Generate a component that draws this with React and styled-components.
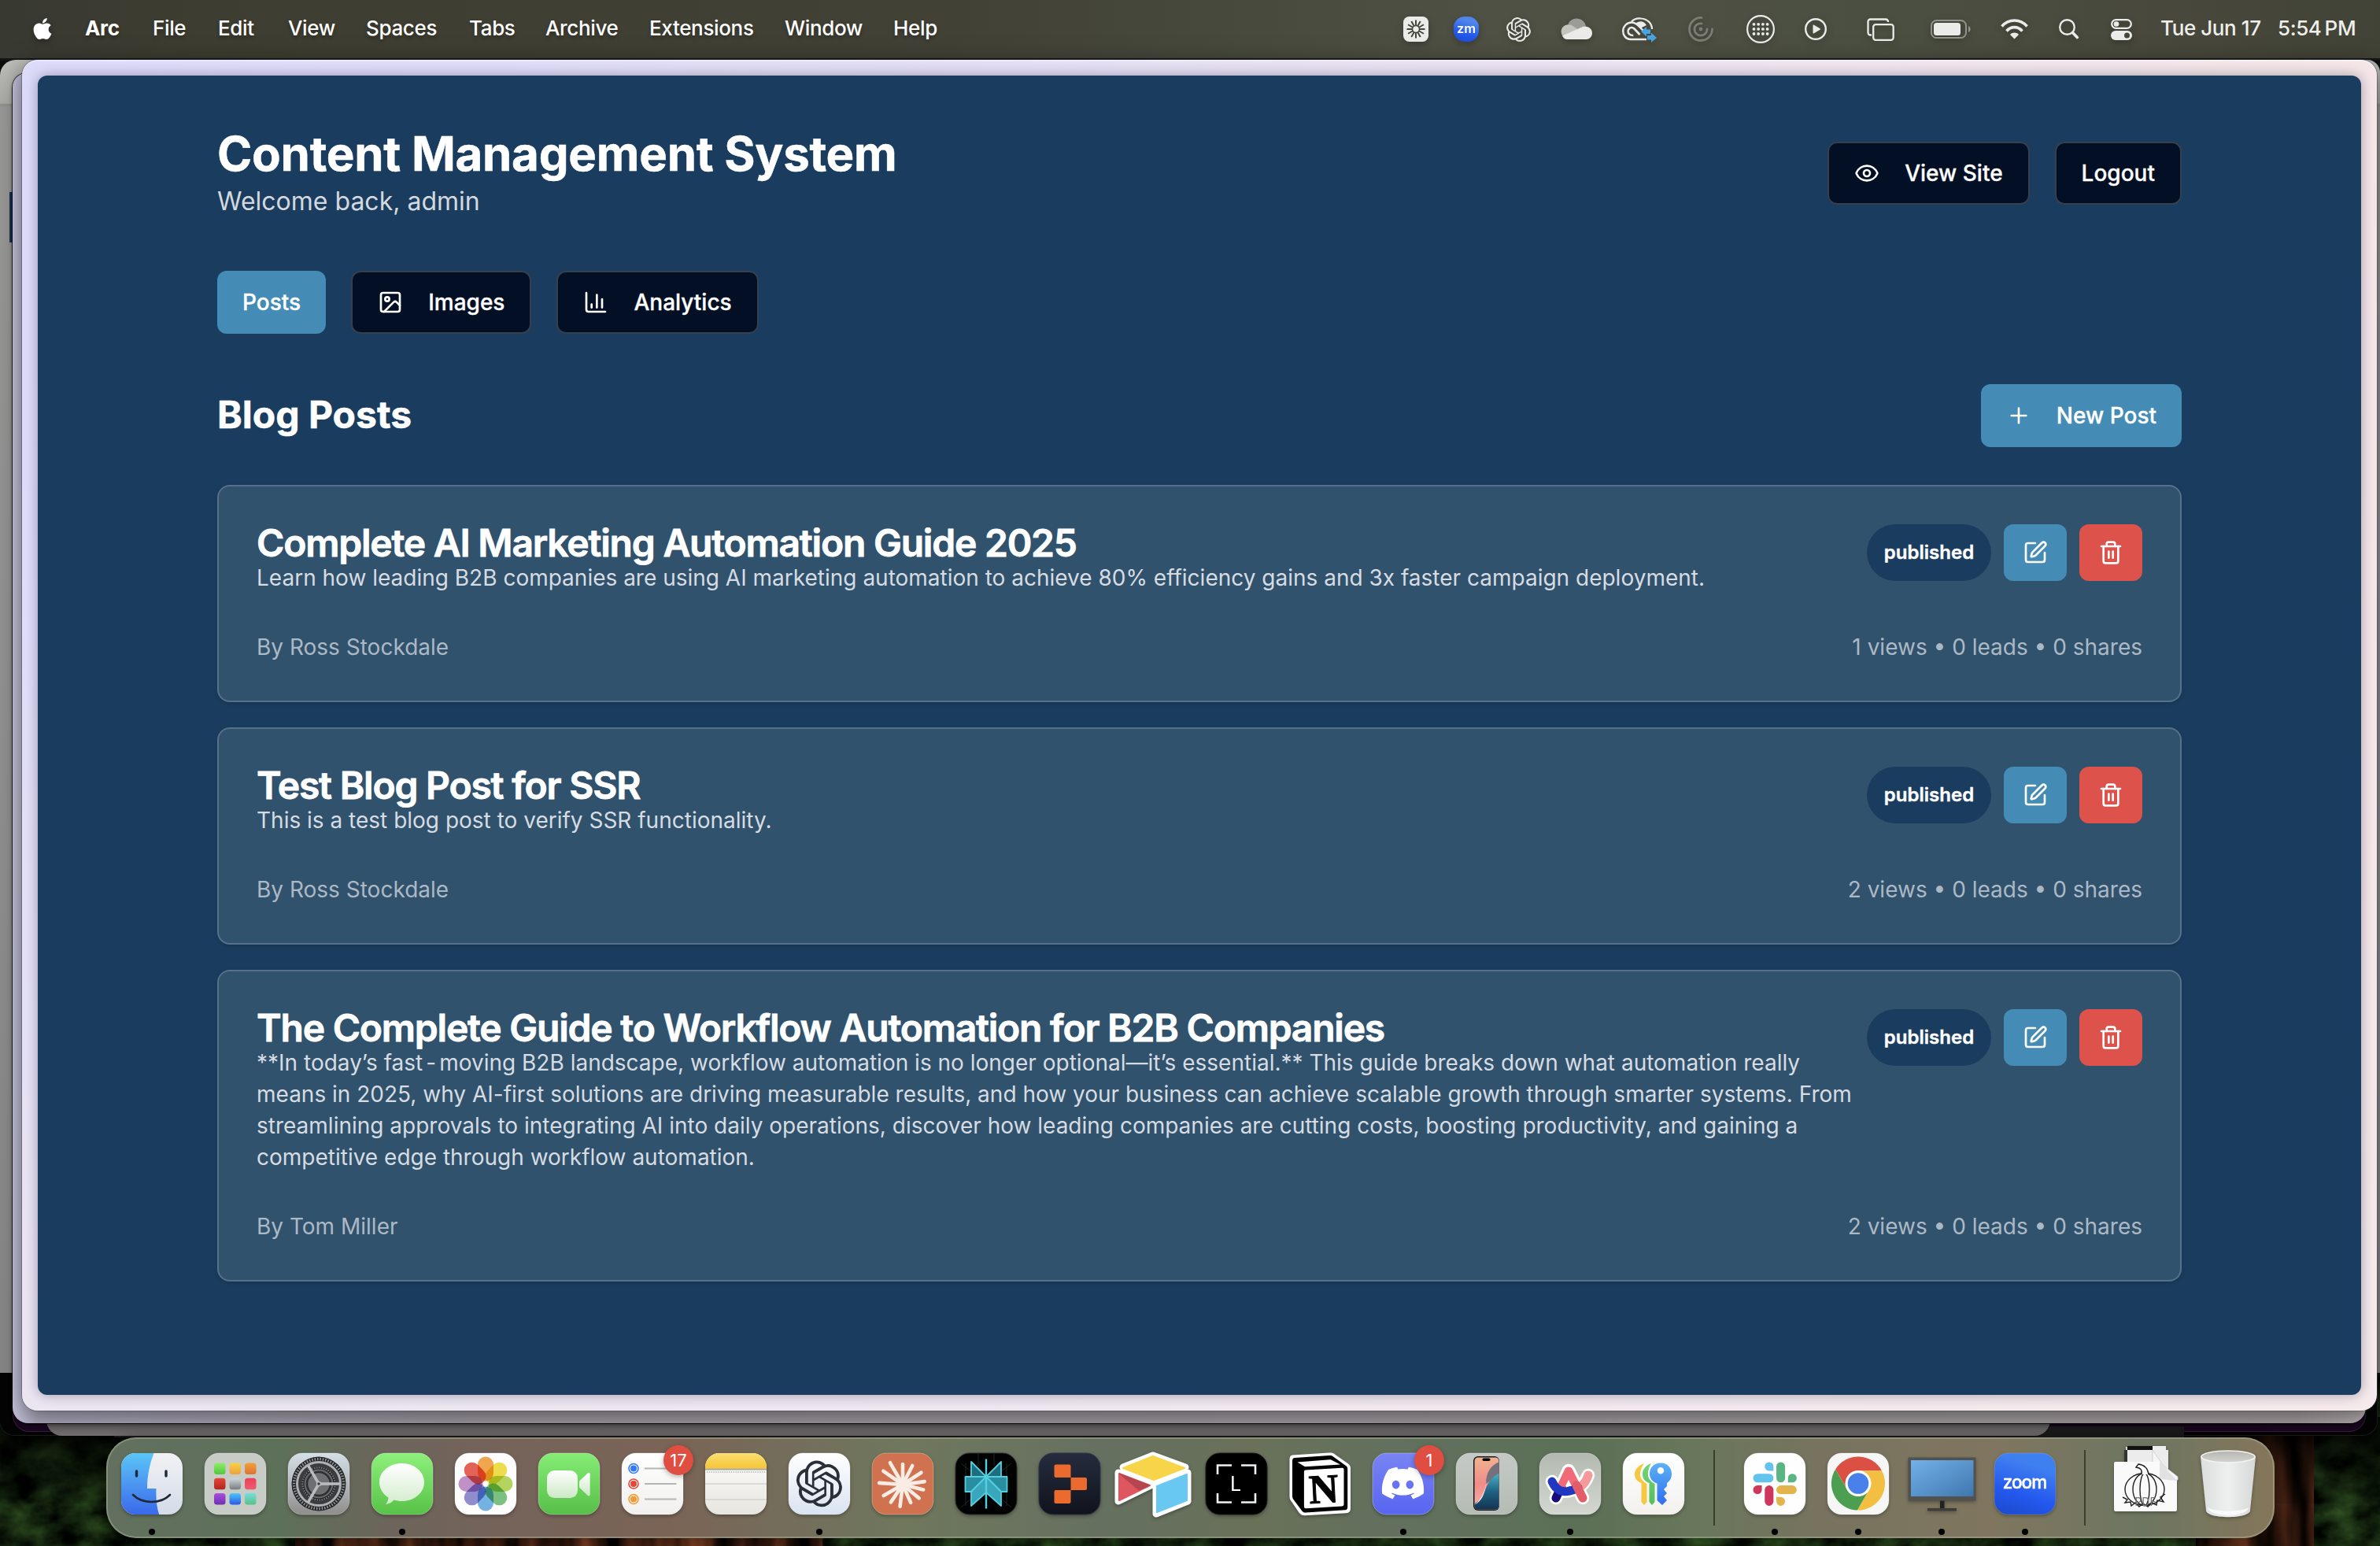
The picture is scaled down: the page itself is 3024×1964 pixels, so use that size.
import React from "react";
import styled, { createGlobalStyle, css } from "styled-components";
import { Eye, Image as ImageIcon, ChartColumn, Plus, SquarePen, Trash2 } from "lucide-react";
import { FaApple, FaDiscord } from "react-icons/fa";

const Global = createGlobalStyle`
  * { box-sizing: border-box; }
  html, body { margin: 0; padding: 0; background: #07090a; }
  body { width: 3024px; height: 1964px; overflow: hidden; font-family: Inter, "Liberation Sans", sans-serif; }
  h1, h2, h3, p { margin: 0; }
  button { font-family: inherit; margin: 0; }
`;

/* ---------- desktop ---------- */

const Screen = styled.div`
  position: relative;
  width: 3024px;
  height: 1964px;
  display: flex;
  flex-direction: column;
  overflow: hidden;
  background: #07090a;
`;

const Wallpaper = styled.svg`
  position: absolute;
  inset: 0;
  width: 3024px;
  height: 1964px;
`;

const MenuBar = styled.header`
  position: relative;
  height: 74px;
  flex: none;
  display: flex;
  align-items: center;
  padding: 0 32px 0 39px;
  color: #fff;
  font-size: 26px;
  line-height: 74px;
  background: linear-gradient(90deg, #383931 0, #3e3d31 260px, #414136 1200px, #4f5144 1900px, #4b4f41 2400px, #48493c 2750px, #414336 100%);
`;

const AppleLogo = styled(FaApple)`
  width: 30px;
  height: 33px;
  margin-right: 39px;
  padding-bottom: 2px;
  filter: drop-shadow(0 3px 4px rgba(0, 0, 0, 0.3));
`;

const MenuItem = styled.span`
  width: ${(p) => p.$width}px;
  flex: none;
  white-space: nowrap;
  padding-bottom: 2px;
  font-weight: ${(p) => (p.$bold ? 700 : 500)};
  letter-spacing: -0.35px;
  text-shadow: 0 3px 5px rgba(0, 0, 0, 0.3);
`;

const StatusArea = styled.div`
  margin-left: auto;
  display: flex;
  align-items: center;
`;

const StatusIcon = styled.svg`
  display: block;
  flex: none;
  overflow: visible;
  margin-left: ${(p) => p.$gap}px;
  filter: drop-shadow(0 3px 4px rgba(0, 0, 0, 0.25));
`;

const Clock = styled.span`
  width: ${(p) => p.$width}px;
  margin-left: ${(p) => p.$gap}px;
  flex: none;
  white-space: nowrap;
  padding-bottom: 2px;
  font-size: 26px;
  font-weight: 500;
  letter-spacing: ${(p) => p.$track};
  color: #efefec;
`;

const Desktop = styled.main`
  position: relative;
  flex: 1;
  display: flex;
  flex-direction: column;
`;

const BackWindow = styled.div`
  position: absolute;
  left: ${(p) => p.$x}px;
  top: ${(p) => p.$y - 74}px;
  width: ${(p) => p.$w}px;
  height: ${(p) => p.$h}px;
  border-radius: ${(p) => p.$r};
  background: ${(p) => p.$bg};
  box-shadow: ${(p) => p.$shadow || "none"};
`;

const BrowserWindow = styled.div`
  position: relative;
  margin: 2px 4px 0 28px;
  height: 1716px;
  flex: none;
  padding: 20px;
  border-radius: 20px;
  background: linear-gradient(180deg, rgba(245, 236, 238, 0) 30%, rgba(245, 236, 238, 0.6) 100%),
    linear-gradient(97deg, #dddbfa 0%, #e4dff4 40%, #efe4ef 72%, #f3e5e7 88%, #f6e7e8 100%);
  box-shadow: 0 0 0 1px rgba(70, 70, 80, 0.45), 0 6px 30px rgba(0, 0, 0, 0.5), inset 0 2px 0 rgba(255, 255, 255, 0.35);
`;

/* ---------- web page ---------- */

const Page = styled.div`
  height: 1676px;
  border-radius: 12px;
  background: #1a3c5e;
  box-shadow: 0 0 16px rgba(40, 40, 70, 0.4);
  padding: 64px 228px 0;
  color: #fff;
`;

const PageHeader = styled.div`
  display: flex;
  align-items: center;
  justify-content: space-between;
  height: 120px;
`;

const PageTitle = styled.h1`
  font-size: 60px;
  line-height: 70px;
  padding-bottom: 2px;
  font-weight: 700;
  letter-spacing: -0.29px;
  white-space: nowrap;
  -webkit-text-stroke: 0.5px currentColor;
`;

const Welcome = styled.p`
  font-size: 32px;
  line-height: 48px;
  color: #d3d9df;
`;

const ButtonRow = styled.div`
  display: flex;
  gap: 32px;
  margin-top: ${(p) => p.$top || 0}px;
`;

const Button = styled.button`
  height: 80px;
  display: inline-flex;
  align-items: center;
  gap: 32px;
  padding: 0 32px;
  border-radius: 12px;
  font-size: 28px;
  font-weight: 500;
  line-height: 40px;
  color: #fff;
  white-space: nowrap;
  -webkit-text-stroke: 0.3px currentColor;
  ${(p) =>
    p.$primary
      ? css`
          border: 0;
          background: #448cb5;
        `
      : css`
          border: 2px solid #363f4e;
          background: #020f24;
        `}
  svg { width: 32px; height: 32px; flex: none; }
`;

const SectionHeader = styled.div`
  margin: 64px 0 48px;
  height: 80px;
  display: flex;
  align-items: center;
  justify-content: space-between;
`;

const SectionTitle = styled.h2`
  font-size: 48px;
  line-height: 64px;
  font-weight: 700;
  padding-bottom: 2px;
  -webkit-text-stroke: 0.5px currentColor;
`;

const PostList = styled.div`
  display: flex;
  flex-direction: column;
  gap: 32px;
`;

const Card = styled.article`
  border: 2px solid #57718a;
  border-radius: 16px;
  background: #30526d;
  padding: 48px;
  display: flex;
  flex-direction: column;
  gap: 48px;
  box-shadow: 0 2px 4px rgba(0, 0, 0, 0.12);
`;

const CardTop = styled.div`
  display: flex;
  justify-content: space-between;
  align-items: flex-start;
`;

const PostTitle = styled.h3`
  font-size: 48px;
  line-height: 48px;
  font-weight: 600;
  letter-spacing: -1.22px;
  white-space: nowrap;
  -webkit-text-stroke: 0.8px currentColor;
`;

const Excerpt = styled.p`
  font-size: 28px;
  line-height: 40px;
  color: #d6dce2;
  white-space: pre;
`;

const WideHyphen = styled.span`
  padding: 0 4px;
`;

const Actions = styled.div`
  display: flex;
  gap: 16px;
`;

const Badge = styled.span`
  width: 158px;
  height: 72px;
  border-radius: 36px;
  display: grid;
  place-items: center;
  padding-bottom: 2px;
  background: #1a3c5e;
  font-size: 24px;
  font-weight: 600;
  -webkit-text-stroke: 0.4px currentColor;
`;

const IconButton = styled.button`
  width: 80px;
  height: 72px;
  border: 0;
  padding: 0;
  border-radius: 12px;
  display: grid;
  place-items: center;
  color: #fff;
  background: ${(p) => (p.$danger ? "#de524c" : "#448cb5")};
`;

const CardMeta = styled.div`
  display: flex;
  justify-content: space-between;
  font-size: 28px;
  line-height: 40px;
  color: #acb9c5;
`;

/* ---------- dock ---------- */

const DockBar = styled.nav`
  position: relative;
  margin: 34px 0 0 135px;
  width: 2755px;
  height: 128px;
  flex: none;
  display: flex;
  align-items: stretch;
  padding: 0 5px;
  border-radius: 38px;
  background: linear-gradient(90deg, #63705f 0, #5d7059 8%, #6c655b 13%, #75635a 18%, #7a6456 26%, #72705c 33%, #6f785d 37%, #667060 46%, #697159 53%, #62705e 60%, #5b7056 68%, #6b775c 74%, #77735f 79%, #80765f 87%, #6d7661 94%, #85765a 100%);
  box-shadow: inset 0 0 0 2px rgba(190, 195, 170, 0.38), 0 0 18px rgba(0, 0, 0, 0.35);
`;

const DockItem = styled.div`
  position: relative;
  width: 106px;
  display: flex;
  flex-direction: column;
  align-items: center;
  padding-top: 19px;
`;

const DockArt = styled.svg`
  width: 80px;
  height: 80px;
  overflow: visible;
  display: block;
  filter: drop-shadow(0 2px 2px rgba(0, 0, 0, 0.3));
`;

const RunningDot = styled.i`
  width: 8px;
  height: 8px;
  margin-top: 17px;
  border-radius: 50%;
  background: #000;
`;

const CountBadge = styled.span`
  position: absolute;
  top: 10px;
  left: 67px;
  width: 38px;
  height: 38px;
  border-radius: 50%;
  background: #e04e41;
  color: #fff;
  font-size: 22px;
  line-height: 38px;
  text-align: center;
  box-shadow: 0 2px 6px rgba(0, 0, 0, 0.3);
`;

const DockDivider = styled.div`
  width: ${(p) => p.$width}px;
  display: flex;
  justify-content: center;
  padding: 16px 0;
  &::after { content: ""; width: 2px; background: rgba(35, 40, 25, 0.7); }
`;

/* ---------- drawings ---------- */

const OPENAI =
  "M22.2819 9.8211a5.9847 5.9847 0 0 0-.5157-4.9108 6.0462 6.0462 0 0 0-6.5098-2.9A6.0651 6.0651 0 0 0 4.9807 4.1818a5.9847 5.9847 0 0 0-3.9977 2.9 6.0462 6.0462 0 0 0 .7427 7.0966 5.98 5.98 0 0 0 .511 4.9107 6.051 6.051 0 0 0 6.5146 2.9001A5.9847 5.9847 0 0 0 13.2599 24a6.0557 6.0557 0 0 0 5.7718-4.2058 5.9894 5.9894 0 0 0 3.9977-2.9001 6.0557 6.0557 0 0 0-.7475-7.0729zm-9.022 12.6081a4.4755 4.4755 0 0 1-2.8764-1.0408l.1419-.0804 4.7783-2.7582a.7948.7948 0 0 0 .3927-.6813v-6.7369l2.02 1.1686a.071.071 0 0 1 .038.052v5.5826a4.504 4.504 0 0 1-4.4945 4.4944zm-9.6607-4.1254a4.4708 4.4708 0 0 1-.5346-3.0137l.142.0852 4.783 2.7582a.7712.7712 0 0 0 .7806 0l5.8428-3.3685v2.3324a.0804.0804 0 0 1-.0332.0615L9.74 19.9502a4.4992 4.4992 0 0 1-6.1408-1.6464zM2.3408 7.8956a4.485 4.485 0 0 1 2.3655-1.9728V11.6a.7664.7664 0 0 0 .3879.6765l5.8144 3.3543-2.0201 1.1685a.0757.0757 0 0 1-.071 0l-4.8303-2.7865A4.504 4.504 0 0 1 2.3408 7.872zm16.5963 3.8558L13.1038 8.364 15.1192 7.2a.0757.0757 0 0 1 .071 0l4.8303 2.7913a4.4944 4.4944 0 0 1-.6765 8.1042v-5.6772a.79.79 0 0 0-.407-.667zm2.0107-3.0231l-.142-.0852-4.7735-2.7818a.7759.7759 0 0 0-.7854 0L9.409 9.2297V6.8974a.0662.0662 0 0 1 .0284-.0615l4.8303-2.7866a4.4992 4.4992 0 0 1 6.6802 4.66zM8.3065 12.863l-2.02-1.1638a.0804.0804 0 0 1-.038-.0567V6.0742a4.4992 4.4992 0 0 1 7.3757-3.4537l-.142.0805L8.704 5.459a.7948.7948 0 0 0-.3927.6813zm1.0976-2.3654l2.602-1.4998 2.6069 1.4998v2.9994l-2.5974 1.4997-2.6067-1.4997Z";

const Grad = ({ id, stops, x2 = 0, y2 = 1 }) => (
  <linearGradient id={id} x1="0" y1="0" x2={x2} y2={y2}>
    {stops.map((c, i) => (
      <stop key={i} offset={i / (stops.length - 1)} stopColor={c} />
    ))}
  </linearGradient>
);

const Tile = ({ fill, stroke = "rgba(255,255,255,0.3)" }) => (
  <rect x="1" y="1" width="78" height="78" rx="18" fill={fill} stroke={stroke} strokeWidth="1" />
);

const Finder = () => (
  <>
    <defs>
      <Grad id="fb" stops={["#5cc6f8", "#3a68ea"]} />
      <Grad id="fw" stops={["#f1f2f4", "#d3dbe8"]} />
      <clipPath id="fc"><rect x="1" y="1" width="78" height="78" rx="18" /></clipPath>
    </defs>
    <g clipPath="url(#fc)">
      <rect width="80" height="80" fill="url(#fw)" />
      <path d="M0 0H43C38 12 34 28 34 46h11.500C45 58 46 70 49.500 80H0z" fill="url(#fb)" />
    </g>
    <path d="M20.500 24v6M58 24v6" stroke="#1f2a38" strokeWidth="3.400" strokeLinecap="round" />
    <path d="M16 54c12 12 35 12 47 0" fill="none" stroke="#1f2a38" strokeWidth="2.600" strokeLinecap="round" />
  </>
);

const TILE_COLORS = [
  ["#8fec69", "#55c63e"], ["#f8cf48", "#eda23a"], ["#f2a03c", "#dd7430"],
  ["#e2483a", "#b3261d"], ["#d0d7dc", "#777d80"], ["#ec4058", "#ee5d72"],
  ["#a94de0", "#7030b0"], ["#4ac6f7", "#2c5be8"], ["#74dde0", "#59c184"],
];

const Launchpad = () => (
  <>
    <defs>
      {TILE_COLORS.map((c, i) => <Grad key={i} id={`lp${i}`} stops={c} />)}
    </defs>
    <Tile fill="#c8ccc6" />
    {TILE_COLORS.map((c, i) => (
      <rect key={i} x={13 + (i % 3) * 19.500} y={13.500 + Math.floor(i / 3) * 19.200} width="14.500" height="14.500" rx="3.500" fill={`url(#lp${i})`} />
    ))}
  </>
);

const Settings = () => (
  <>
    <defs><Grad id="sg" stops={["#d5dfe6", "#b4b9bd", "#8f8d8b"]} /></defs>
    <Tile fill="url(#sg)" />
    <circle cx="40" cy="40" r="34.500" fill="#222426" />
    <circle cx="40" cy="40" r="31.500" fill="none" stroke="#94979a" strokeWidth="3.500" strokeDasharray="1.500 1.900" />
    <circle cx="40" cy="40" r="27.500" fill="#3a3c3e" stroke="#aeb1b4" strokeWidth="3" />
    <circle cx="40" cy="40" r="20" fill="#66686a" stroke="#222426" strokeWidth="3" />
    <circle cx="40" cy="40" r="20.500" fill="none" stroke="#7f8284" strokeWidth="2" strokeDasharray="1.500 1.500" />
    <circle cx="40" cy="40" r="15" fill="#6d6f70" stroke="#2c2e30" strokeWidth="2.500" />
    {[0, 120, 240].map((a) => (
      <path key={a} d="M40 40H67" stroke="#b9bcbe" strokeWidth="3.600" transform={`rotate(${a} 40 40)`} />
    ))}
    <circle cx="40" cy="40" r="2.500" fill="#3a3c3e" stroke="#b9bcbe" strokeWidth="1.500" />
  </>
);

const Messages = () => (
  <>
    <defs>
      <Grad id="mg" stops={["#8df07c", "#58c147"]} />
      <Grad id="mw" stops={["#ffffff", "#d3eccd"]} />
    </defs>
    <Tile fill="url(#mg)" />
    <path d="M39.500 14C23.500 14 11 24.500 11 38c0 8 4.500 15 11.500 19.500-.2 3.500-1.500 6-3.500 8.500 4.500-.5 8-2.500 10.500-5.500 3 .9 6.500 1.500 10 1.500 16 0 28.500-10.500 28.500-24S55.500 14 39.500 14z" fill="url(#mw)" />
  </>
);

const PETALS = ["#f0982f", "#ecd92c", "#a9cf45", "#66b86c", "#5ba7e0", "#7f79c8", "#b77fc0", "#e2483a"];

const Petal = styled.rect`
  mix-blend-mode: multiply;
`;

const Photos = () => (
  <>
    <Tile fill="#fdfdfd" />
    {PETALS.map((c, i) => (
      <Petal key={c} x="30" y="5.500" width="20" height="31" rx="10" fill={c} opacity="0.85" transform={`rotate(${i * 45} 40 40)`} />
    ))}
  </>
);

const FaceTime = () => (
  <>
    <defs>
      <Grad id="ftg" stops={["#85ec76", "#57bf47"]} />
      <Grad id="ftw" stops={["#ffffff", "#cbe9c5"]} />
    </defs>
    <Tile fill="url(#ftg)" />
    <rect x="12" y="23" width="39" height="35" rx="9.500" fill="url(#ftw)" />
    <path d="M53 38c0-1 .4-2 1.200-2.600l9.500-9c1.300-1.200 3-.5 3 1.300v25.800c0 1.800-1.700 2.500-3 1.300l-9.500-9C53.400 45.200 53 44 53 43z" fill="url(#ftw)" />
  </>
);

const Reminders = () => (
  <>
    <defs><Grad id="rg" stops={["#ffffff", "#f1f0ee"]} /></defs>
    <Tile fill="url(#rg)" />
    {[["#3478f6", 20.500], ["#e5463a", 40], ["#ef9b36", 59.500]].map(([c, y]) => (
      <g key={y}>
        <circle cx="16" cy={y} r="6" fill="none" stroke={c} strokeWidth="1.600" />
        <circle cx="16" cy={y} r="4" fill={c} />
        <path d={`M30 ${y}H70.500`} stroke="#b5b5b8" strokeWidth="2" />
      </g>
    ))}
  </>
);

const Notes = () => (
  <>
    <defs>
      <Grad id="ny" stops={["#fbe078", "#f6c533"]} />
      <Grad id="nw" stops={["#fdfdfb", "#e6e5df"]} />
      <clipPath id="nc"><rect x="1" y="1" width="78" height="78" rx="18" /></clipPath>
    </defs>
    <g clipPath="url(#nc)">
      <rect width="80" height="80" fill="url(#nw)" />
      <rect width="80" height="20.500" fill="url(#ny)" />
      <path d="M0 21.500h80" stroke="#a8a490" strokeWidth="2" />
      <path d="M3 25h75" stroke="#b5b4ae" strokeWidth="1.400" strokeDasharray="1.400 1.400" />
      <path d="M0 40h80M0 60h80" stroke="#d3d2cd" strokeWidth="1.600" />
    </g>
  </>
);

const ChatGPT = () => (
  <>
    <defs><Grad id="cg" stops={["#ffffff", "#dbe3f2"]} /></defs>
    <Tile fill="url(#cg)" />
    <path d={OPENAI} fill="#2b3038" transform="translate(10.500 10.500) scale(2.450)" />
  </>
);

const RAYS = [[-90, 26], [-63, 27], [-33, 28], [-8, 28], [14, 27], [40, 27], [66, 25], [97, 28], [124, 27], [150, 28], [184, 30], [215, 30], [240, 32]];
const Claude = () => (
  <>
    <Tile fill="#d0724f" />
    <g stroke="#f8ece4" strokeWidth="4.600" strokeLinecap="round">
      {RAYS.map(([a, r]) => (
        <path key={a} d={`M40 41h${r}`} transform={`rotate(${a} 40 41)`} />
      ))}
    </g>
    <circle cx="40" cy="41" r="8" fill="#f8ece4" />
  </>
);

const Perplexity = () => (
  <>
    <Tile fill="#020202" stroke="#2c2f2c" />
    <path d="M30 1v16M50 1v16M8 14L40 40 72 14M8 70l16-14M72 70L56 56M14 14v54M66 14v54" stroke="#1c2424" strokeWidth="1" fill="none" />
    <g fill="#2a8ea1" stroke="#54cfdf" strokeWidth="1.800" strokeLinejoin="round">
      <path d="M21 12L40 31H21zM59 12L40 31H59z" fill="#1e6d7e" />
      <path d="M13.500 31H40L21 50h-7.500zM66.500 31H40l19 19h7.500z" />
      <path d="M40 31L21 50v18l19-17zM40 31l19 19v18L40 51z" fill="#38a7bb" />
      <path d="M40 8.500v63" strokeWidth="2.400" />
    </g>
  </>
);

const Replit = () => (
  <>
    <defs><Grad id="rp" stops={["#262c3e", "#10131c"]} /></defs>
    <Tile fill="url(#rp)" stroke="#2f3546" />
    <path d="M22.500 15.500h17a2 2 0 0 1 2 2V32h-19a2 2 0 0 1-2-2V17.500a2 2 0 0 1 2-2zM41.500 32H60a2 2 0 0 1 2 2v12a2 2 0 0 1-2 2H41.500zM22.500 48h19v15a2 2 0 0 1-2 2h-17a2 2 0 0 1-2-2V50a2 2 0 0 1 2-2z" fill="#ea6b2d" />
  </>
);

const Airtable = () => (
  <g strokeLinejoin="round">
    <path d="M2 19L40 4l41 15-40 17zM-4 26l41 16-41 20zM44 42l40-16v36L44 78z" fill="#fff" stroke="#fff" strokeWidth="9" />
    <path d="M2 20L40 5l40 15-39 15z" fill="#f8d448" stroke="#f8d448" strokeWidth="2" />
    <path d="M-3 27l39 15-39 19z" fill="#e0565f" stroke="#e0565f" strokeWidth="2" />
    <path d="M-3 27l39 15-14 6z" fill="#b5454e" stroke="#b5454e" strokeWidth="1" />
    <path d="M45 43l38-15v33L45 76z" fill="#68c8f2" stroke="#68c8f2" strokeWidth="2" />
  </g>
);

const Framed = () => (
  <>
    <Tile fill="#000" stroke="#1a1a1a" />
    <path d="M16 28V16.500h18M46 16.500h18V28M16 52v11.500h18M46 63.500h18V52" fill="none" stroke="#eef2f5" strokeWidth="2.600" />
    <text x="32" y="48.500" fontSize="25" fontFamily="Inter, sans-serif" fill="#fff">L</text>
  </>
);

const Notion = () => (
  <>
    <path d="M5 3.500L52 .5c3-.2 5 .3 7 2l17 12c2 1.500 3 3 3 5.500v51c0 4-2 6-5.500 6.300L21 80.300c-3 .2-5-.7-7-3L3.500 62C2 60 1.500 58.500 1.500 56V9c0-3 1-5 3.500-5.500z" fill="#fff" />
    <path d="M8 7l44-3c2-.1 3.500.2 5 1.500l16 11.500c1.500 1 2.200 2 2.200 4v48c0 3-1 4-3.200 4.200L22 76.500c-2 .1-3.500-.5-5-2.500L6.500 60C5.300 58.300 5 57 5 55V11c0-2.500 1-3.800 3-4z" fill="#000" />
    <path d="M11.500 12.500l41-3.200c1 0 1.500 0 2.200.5L66 15.500l-45 2.700z" fill="#fff" />
    <path d="M22 22.600l46-2.800c1.600-.1 2.500.6 2.500 2.200v43.500c0 2-.8 2.800-2.600 3l-45.500 2.700c-1.800.1-2.500-.6-2.500-2.400V25c0-1.600.6-2.300 2.100-2.400z" fill="#fff" />
    <text x="26" y="64" fontSize="52" fontWeight="700" fontFamily="'Liberation Serif', serif" fill="#000" stroke="#000" strokeWidth="1" transform="rotate(-3 45 46)">N</text>
  </>
);

const Discord = () => (
  <>
    <defs><Grad id="dg" stops={["#7984f3", "#5865f0"]} /></defs>
    <Tile fill="url(#dg)" />
    <FaDiscord x={10.5} y={10} size={58} color="#fff" />
  </>
);

const Phone = () => (
  <>
    <defs>
      <Grad id="pb" stops={["#c4c9c5", "#b5bcb4"]} />
      <Grad id="pa" stops={["#f2b28f", "#f08d89", "#f5b4ad"]} />
      <Grad id="pd" stops={["#49b4c6", "#1f6184", "#12314d"]} />
      <clipPath id="pc"><rect x="24.500" y="6.500" width="31" height="66" rx="4.500" /></clipPath>
    </defs>
    <Tile fill="url(#pb)" />
    <rect x="23" y="5" width="33" height="69" rx="6" fill="#16181b" />
    <g clipPath="url(#pc)">
      <rect x="24" y="6" width="33" height="68" fill="url(#pa)" />
      <path d="M57 12C45 16 39 26 39 40l18-12z" fill="#74707e" />
      <path d="M57 26c-12 6-16 14-19 22s-7 13-14 18v8h33z" fill="url(#pd)" />
      <path d="M40 35c-2 14-6 24-16 32 10-5 14-14 16-32z" fill="#fbe9e6" />
    </g>
    <rect x="34.500" y="7.500" width="10" height="3.500" rx="1.700" fill="#000" />
  </>
);

const ArcMark = () => (
  <g fill="none" strokeLinecap="round" strokeLinejoin="round">
    <g stroke="#fff" strokeWidth="16.500">
      <path d="M22 58l16-35 18 35" />
      <path d="M17 37c5 12 14 14 22 12 12-2 20-9 24-20" />
    </g>
    <path d="M22 58l7-15" stroke="#170a7c" strokeWidth="11" />
    <path d="M63 29c-2 6-4 10-8 13" stroke="#f59a9b" strokeWidth="11" />
    <path d="M29 43l9-19 9 18" stroke="#f06a78" strokeWidth="11" />
    <path d="M17 37c5 12 14 14 22 12 4-.8 8-2.300 11-4" stroke="#2038c0" strokeWidth="11" />
    <path d="M48 42l8 16" stroke="#e25c6a" strokeWidth="11" />
    <path d="M38 35l4 8h-8z" fill="#fff" />
  </g>
);

const ArcApp = () => (
  <>
    <defs><Grad id="ag" stops={["#b3b9b1", "#d3d7cf"]} /></defs>
    <Tile fill="url(#ag)" />
    <ArcMark />
  </>
);

const Passwords = () => (
  <>
    <defs>
      <Grad id="kw" stops={["#ffffff", "#f2f1ee"]} />
      <Grad id="kb" stops={["#5db2f3", "#2f6df0"]} />
      <Grad id="kg" stops={["#75d578", "#54bd5c"]} />
    </defs>
    <Tile fill="url(#kw)" />
    <path d="M28 14c-8 3-12 8-12 14 0 5 3 9 8.500 11V63l3.500 4 3.500-4V40C26 37 22 32 23 26c.6-5 3-9 5-12z" fill="#f5c842" />
    <path d="M37 14c-8 3-11 8-11 14 0 5 3 9 8.500 11V63l3.500 4 3.500-4V40C36 37 32 32 33 26c.5-5 2-9 4-12z" fill="url(#kg)" />
    <path d="M49 13.500c-8.500 0-14 6-14 13.500 0 6 3.500 10.500 9.500 12.500V61l6.500 6 6-6-4-5 4-4-4-5 4-4v-4c4-2.500 6-6.500 6-11.500 0-8-5.500-14-14-14zm0 5.500a4 4 0 1 1 0 8.500 4 4 0 0 1 0-8.500z" fill="url(#kb)" fillRule="evenodd" />
  </>
);

const Slack = () => (
  <>
    <Tile fill="#fefefe" />
    <g transform="translate(12.500 12.300) scale(1.030)">
      <path fill="#62c3ec" d="M19.712.133a5.381 5.381 0 0 0-5.376 5.387 5.381 5.381 0 0 0 5.376 5.386h5.376V5.52A5.381 5.381 0 0 0 19.712.133m0 14.365H5.376A5.381 5.381 0 0 0 0 19.884a5.381 5.381 0 0 0 5.376 5.387h14.336a5.381 5.381 0 0 0 5.376-5.387 5.381 5.381 0 0 0-5.376-5.386" />
      <path fill="#5bb583" d="M53.76 19.884a5.381 5.381 0 0 0-5.376-5.386 5.381 5.381 0 0 0-5.376 5.386v5.387h5.376a5.381 5.381 0 0 0 5.376-5.387m-14.336 0V5.52A5.381 5.381 0 0 0 34.048.133a5.381 5.381 0 0 0-5.376 5.387v14.364a5.381 5.381 0 0 0 5.376 5.387 5.381 5.381 0 0 0 5.376-5.387" />
      <path fill="#e3b44c" d="M34.048 54a5.381 5.381 0 0 0 5.376-5.387 5.381 5.381 0 0 0-5.376-5.386h-5.376v5.386A5.381 5.381 0 0 0 34.048 54m0-14.365h14.336a5.381 5.381 0 0 0 5.376-5.386 5.381 5.381 0 0 0-5.376-5.387H34.048a5.381 5.381 0 0 0-5.376 5.387 5.381 5.381 0 0 0 5.376 5.386" />
      <path fill="#ce375c" d="M0 34.249a5.381 5.381 0 0 0 5.376 5.386 5.381 5.381 0 0 0 5.376-5.386v-5.387H5.376A5.381 5.381 0 0 0 0 34.25m14.336-.001v14.364A5.381 5.381 0 0 0 19.712 54a5.381 5.381 0 0 0 5.376-5.387V34.25a5.381 5.381 0 0 0-5.376-5.387 5.381 5.381 0 0 0-5.376 5.387" />
    </g>
  </>
);

const Chrome = () => (
  <>
    <Tile fill="#f6f7f5" />
    <g transform="translate(40 39.500)">
      <path d="M30 -16H0L0 0-13.860 8-28.900 -18A34 34 0 0 1 30 -16z" fill="#dc5044" />
      <path d="M30 -16A34 34 0 0 1-1.100 34L13.860 8 0 0V-16z" fill="#f3bf42" />
      <path d="M-1.100 34A34 34 0 0 1-28.900 -18L-13.860 8 0 0 13.860 8z" fill="#4c9f50" />
      <circle r="16.500" fill="#fff" />
      <circle r="13.300" fill="#4a80ea" />
    </g>
  </>
);

const Display = () => (
  <>
    <defs><Grad id="ds" x2={1} stops={["#73b1ea", "#3f77ad"]} /></defs>
    <rect x="-2.500" y="6.500" width="86" height="55" fill="#515150" />
    <rect x="1" y="10" width="79.500" height="46" fill="url(#ds)" />
    <path d="M38 61.500h5.500v10H38z" fill="#222" />
    <rect x="22" y="71" width="37" height="3.500" fill="#3c3c3b" />
  </>
);

const Zoom = () => (
  <>
    <defs><Grad id="zg" x2={-0.300} stops={["#3f80f0", "#2459ee", "#1a45c4"]} /></defs>
    <Tile fill="url(#zg)" stroke="rgba(255,255,255,0.15)" />
    <text x="39.500" y="46" textAnchor="middle" fontSize="22.500" fontWeight="500" letterSpacing="-1" fontFamily="Inter, sans-serif" fill="#fff" stroke="#fff" strokeWidth="0.400">zoom</text>
  </>
);

const Documents = () => (
  <>
    <path d="M16-7h50v40H16z" fill="#cfcfcf" />
    <path d="M18-8h32v6H18z" fill="#111" />
    <path d="M50-8h17v14H50z" fill="#ededed" />
    <path d="M14-3h4v16h-4z" fill="#333" />
    <path d="M18-3h52v26H18z" fill="#ececec" />
    <path d="M50-3l14 20 18 14v4H50z" fill="#f7f7f7" stroke="#cfcfcf" />
    <path d="M3 12h56v20l22 3v38a2 2 0 0 1-2 2H3a2 2 0 0 1-2-2V14a2 2 0 0 1 2-2z" fill="#fafafa" />
    <path d="M59 12v22l22 2z" fill="#e2e2e2" />
    <g fill="none" stroke="#222" strokeWidth="1.400">
      <ellipse cx="40" cy="47" rx="25" ry="20.500" />
      <ellipse cx="40" cy="47" rx="15" ry="20.500" />
      <ellipse cx="40" cy="47" rx="6" ry="20.500" />
      <path d="M36 28c1-6-1-8-7-9l3-4c8 1 12 5 13 13" fill="#fff" />
      <path d="M12 57l6 3-3 4 7-1 1 5 5-4 5 5 5-4 6 4 5-5 6 3 1-6 8 2-4-6 6-4" />
    </g>
    <text x="41" y="68" textAnchor="middle" fontSize="14" fontWeight="400" fontFamily="Inter, sans-serif" fill="#777">PDF</text>
  </>
);

const Trash = () => (
  <>
    <defs>
      <Grad id="tg" y2={0} x2={1} stops={["#dcdddd", "#eeefef", "#d6d8d8"]} />
      <Grad id="ti" stops={["#b5b5ae", "#d4d4cf"]} />
    </defs>
    <path d="M5 6c0-10 70-10 70 0l-7 68c-1 11-55 11-56 0z" fill="url(#tg)" />
    <ellipse cx="40" cy="5.500" rx="34" ry="7.500" fill="url(#ti)" stroke="#f3f3f1" strokeWidth="1.600" />
    <path d="M14 70c2 13 50 13 52 0-6 6-46 6-52 0z" fill="#f9fafa" />
  </>
);

const DOCK = [
  { art: Finder, running: true }, { art: Launchpad }, { art: Settings }, { art: Messages, running: true },
  { art: Photos }, { art: FaceTime }, { art: Reminders, count: 17 }, { art: Notes }, { art: ChatGPT, running: true },
  { art: Claude }, { art: Perplexity }, { art: Replit }, { art: Airtable }, { art: Framed }, { art: Notion },
  { art: Discord, running: true, count: 1 }, { art: Phone }, { art: ArcApp, running: true }, { art: Passwords },
  { divider: 48 },
  { art: Slack, running: true }, { art: Chrome, running: true }, { art: Display, running: true }, { art: Zoom, running: true },
  { divider: 46 },
  { art: Documents }, { art: Trash },
];

const Dock = () => (
  <DockBar>
    {DOCK.map(({ art: Art, running, count, divider }, i) =>
      divider ? (
        <DockDivider key={i} $width={divider} />
      ) : (
        <DockItem key={i}>
          <DockArt viewBox="0 0 80 80"><Art /></DockArt>
          {running && <RunningDot />}
          {count && <CountBadge>{count}</CountBadge>}
        </DockItem>
      )
    )}
  </DockBar>
);

/* ---------- menu bar ---------- */

const MENUS = [
  ["Arc", 86, true], ["File", 83], ["Edit", 89], ["View", 99], ["Spaces", 131], ["Tabs", 97],
  ["Archive", 132], ["Extensions", 172], ["Window", 138], ["Help", 60],
];

const W = "#ebebe9";

const StatusIcons = () => (
  <StatusArea>
    <StatusIcon width="32" height="32" viewBox="0 0 32 32">
      <rect width="32" height="32" rx="7.500" fill={W} />
      <g stroke="#45463a" strokeWidth="2" strokeLinecap="butt">
        {Array.from({ length: 12 }, (_, i) => (
          <path key={i} d="M20 16h7.500" transform={`rotate(${i * 30} 16 16)`} />
        ))}
      </g>
      <circle cx="16" cy="16" r="4.500" fill="none" stroke="#45463a" strokeWidth="1.500" />
    </StatusIcon>
    <StatusIcon $gap={32} width="32" height="32" viewBox="0 0 32 32">
      <defs><Grad id="zms" x2={-0.300} stops={["#4f86ea", "#2459ee", "#1b49c8"]} /></defs>
      <rect width="32" height="32" rx="14" fill="url(#zms)" />
      <text x="16" y="20.500" textAnchor="middle" fontSize="16.500" fontWeight="600" fontFamily="Inter, sans-serif" fill="#fff">zm</text>
    </StatusIcon>
    <StatusIcon $gap={35} width="31" height="31" viewBox="0 0 24 24"><path d={OPENAI} fill={W} /></StatusIcon>
    <StatusIcon $gap={38} width="40" height="28" viewBox="0 0 40 28">
      <path d="M9 9.500C10 4 14.500.5 20 .5c6 0 11 4 12 9.800L20 16z" fill="#9b9c95" />
      <path d="M2 22C-1 17 1 11 6 9c4-1.500 7-.5 10 1.500l7 4.500L3 23z" fill="#c3c4be" />
      <path d="M2 22.500L28 11c6-2 12 2 12 8 0 4-3 8-7.500 8H8.500C5.500 27 3.500 25.500 2 22.500z" fill={W} />
    </StatusIcon>
    <StatusIcon $gap={38} width="44" height="31" viewBox="0 0 44 31" fill="none">
      <path d="M12 5.500C15 2 19 .9 24 1.500 32 2 38 7.500 38 15" stroke={W} strokeWidth="2.200" />
      <path d="M31 28H11C4.500 28 1.200 22.500 1.200 17.500 1.200 11.500 6 6.500 12 6.500c4 0 6.500 2 9 4.500l8 8" stroke={W} strokeWidth="2.400" />
      <path d="M22.500 22l-7-7.500c-2-2-5.500-2-7 .5-1.500 2.200-1 5 .8 6.500 1.500 1.300 3 1.500 5 1.500" stroke={W} strokeWidth="2.600" />
      <path d="M17 8c4-4 11-4 14 2l-8 4z" fill={W} />
      <path d="M24 18l7-6v3.500h5v5.500h-5v3.500zM44 26l-7 6v-3.500h-5V23h5v-3.500z" fill="#4aa3df" />
    </StatusIcon>
    <StatusIcon $gap={40} width="32" height="32" viewBox="0 0 32 32" fill="none" stroke="#7b7c72" strokeWidth="2.800" strokeLinecap="round">
      <path d="M17 1.500C9 1 1.500 7.500 1.500 16S8 30.500 16 30.500 30.500 24 30.500 16" />
      <path d="M17 9c-5-.6-9 2.500-9 7s3.500 8 8 8 8-3.500 8-8" />
      <circle cx="16" cy="16" r="1" fill="#7b7c72" />
    </StatusIcon>
    <StatusIcon $gap={42} width="36" height="36" viewBox="0 0 36 36">
      <circle cx="18" cy="18" r="16.900" fill="none" stroke={W} strokeWidth="2.200" />
      {Array.from({ length: 12 }, (_, i) => (
        <circle key={i} cx={9.500 + (i % 4) * 5.700} cy={11.800 + Math.floor(i / 4) * 6.100} r="1.900" fill={W} />
      ))}
    </StatusIcon>
    <StatusIcon $gap={38} width="28" height="28" viewBox="0 0 28 28">
      <circle cx="14" cy="14" r="12.800" fill="none" stroke={W} strokeWidth="2.400" />
      <path d="M10.500 9.200v9.600c0 .7.500.9 1 .6l8-4.700c.6-.4.600-1 0-1.400l-8-4.700c-.5-.3-1-.1-1 .6z" fill={W} />
    </StatusIcon>
    <StatusIcon $gap={51} width="35" height="29" viewBox="0 0 35 29" fill="none" stroke={W} strokeWidth="2.300">
      <path d="M27 5V4.500a3 3 0 0 0-3-3H4.500a3 3 0 0 0-3 3v14a3 3 0 0 0 3 3H6" />
      <rect x="8.200" y="8.200" width="25.500" height="19.600" rx="3" />
    </StatusIcon>
    <StatusIcon $gap={46} width="51" height="24" viewBox="0 0 51 24">
      <rect x="1" y="1" width="44" height="22" rx="6.500" fill="none" stroke="#92938b" strokeWidth="2" />
      <rect x="4" y="4" width="34" height="16" rx="3.500" fill={W} />
      <path d="M48 8c3.500 1.500 3.500 6.500 0 8z" fill="#92938b" />
    </StatusIcon>
    <StatusIcon $gap={38} width="35" height="26" viewBox="0 0 35 26" fill="none" stroke={W} strokeWidth="3.600">
      <path d="M1.500 9.500C10-.5 25-.5 33.500 9.500" />
      <path d="M7.500 15.500c5.500-6.500 14.500-6.500 20 0" />
      <path d="M17.500 25.500L12 20c3-3.200 8-3.200 11 0z" fill={W} stroke="none" />
    </StatusIcon>
    <StatusIcon $gap={39} width="25" height="26" viewBox="0 0 25 26" fill="none" stroke={W} strokeLinecap="round">
      <circle cx="10.500" cy="10.500" r="9.300" strokeWidth="2.400" />
      <path d="M17.500 17.500l5.800 6" strokeWidth="3.600" />
    </StatusIcon>
    <StatusIcon $gap={41} width="27" height="27" viewBox="0 0 27 27">
      <rect x="1.200" y="1.200" width="24.600" height="10.600" rx="5.300" fill="none" stroke={W} strokeWidth="2.200" />
      <circle cx="7" cy="6.500" r="3.300" fill={W} />
      <rect y="15" width="27" height="12" rx="6" fill={W} />
      <circle cx="20.500" cy="21" r="3.500" fill="#45463a" />
    </StatusIcon>
    <Clock $gap={36} $width={126} $track="-0.4px">Tue Jun 17</Clock>
    <Clock $gap={23} $width={98} $track="-0.4px">5:54{"\u2009"}PM</Clock>
  </StatusArea>
);

/* ---------- content ---------- */

const POSTS = [
  {
    title: "Complete AI Marketing Automation Guide 2025",
    body: "Learn how leading B2B companies are using AI marketing automation to achieve 80% efficiency gains and 3x faster campaign deployment.",
    author: "Ross Stockdale",
    views: 1,
  },
  {
    title: "Test Blog Post for SSR",
    body: "This is a test blog post to verify SSR functionality.",
    author: "Ross Stockdale",
    views: 2,
  },
  {
    title: "The Complete Guide to Workflow Automation for B2B Companies",
    body: (
      <>
        **In today’s fast<WideHyphen>-</WideHyphen>moving B2B landscape, workflow automation is no longer optional—it’s essential.** This guide breaks down what automation really
        {"\n"}means in 2025, why AI-first solutions are driving measurable results, and how your business can achieve scalable growth through smarter systems. From
        {"\n"}streamlining approvals to integrating AI into daily operations, discover how leading companies are cutting costs, boosting productivity, and gaining a
        {"\n"}competitive edge through workflow automation.
      </>
    ),
    author: "Tom Miller",
    views: 2,
  },
];

const PostCard = ({ post }) => (
  <Card>
    <CardTop>
      <div>
        <PostTitle>{post.title}</PostTitle>
        <Excerpt>{post.body}</Excerpt>
      </div>
      <Actions>
        <Badge>published</Badge>
        <IconButton aria-label="Edit"><SquarePen size={32} /></IconButton>
        <IconButton $danger aria-label="Delete"><Trash2 size={32} /></IconButton>
      </Actions>
    </CardTop>
    <CardMeta>
      <span>By {post.author}</span>
      <span>{post.views} views • 0 leads • 0 shares</span>
    </CardMeta>
  </Card>
);

const Forest = () => (
  <Wallpaper viewBox="0 0 3024 1964">
    <defs>
      <filter id="leaves" x="0" y="0" width="100%" height="100%" colorInterpolationFilters="sRGB">
        <feTurbulence type="fractalNoise" baseFrequency="0.022 0.030" numOctaves="4" seed="8" />
        <feColorMatrix values="0.32 0 0 0 -0.09  0.50 0 0 0 -0.12  0.22 0 0 0 -0.06  0 0 0 0 1" />
      </filter>
      <filter id="bark" x="0" y="0" width="100%" height="100%" colorInterpolationFilters="sRGB">
        <feTurbulence type="fractalNoise" baseFrequency="0.030 0.006" numOctaves="3" seed="3" />
        <feColorMatrix values="0.75 0 0 0 -0.15  0.38 0 0 0 -0.08  0.22 0 0 0 -0.05  0 0 0 0 1" />
      </filter>
      <Grad id="shade" stops={["rgba(0,0,0,0.85)", "rgba(0,0,0,0.1)"]} />
    </defs>
    <rect width="3024" height="1964" fill="#0a0d0a" />
    <rect y="1744" width="3024" height="220" filter="url(#leaves)" />
    <rect x="375" y="1900" width="670" height="64" filter="url(#bark)" />
    <rect x="2790" y="1800" width="150" height="164" filter="url(#bark)" />
    <rect y="1800" width="3024" height="110" fill="url(#shade)" />
    <rect y="74" width="3024" height="3" fill="#14161a" />
  </Wallpaper>
);

export default function App() {
  return (
    <Screen>
      <Global />
      <Forest />
      <MenuBar>
        <AppleLogo />
        {MENUS.map(([label, width, bold]) => (
          <MenuItem key={label} $width={width} $bold={bold}>{label}</MenuItem>
        ))}
        <StatusIcons />
      </MenuBar>
      <Desktop>
        <BackWindow $x={0} $y={1500} $w={3020} $h={323} $r="0 0 18px 18px" $bg="#040404" $shadow="0 0 0 1px #1b1b1b, 0 4px 30px rgba(0,0,0,.6)" />
        <BackWindow $x={0} $y={76} $w={3024} $h={1668} $r="20px 16px 0 0" $bg="linear-gradient(180deg, #bfbfba 0, #a9a9a5 55px, #8c8c89 57px, #979796 60px, #909090 50%, #868686 100%)" />
        <BackWindow $x={12} $y={244} $w={10} $h={64} $r="0" $bg="#143258" />
        <BackWindow $x={17} $y={1700} $w={2988} $h={118} $r="0 0 20px 20px" $bg="#1a0720" $shadow="0 0 0 1px #35203a" />
        <BackWindow $x={145} $y={1812} $w={2630} $h={14} $r="0" $bg="#1b1b1b" />
        <BackWindow $x={59} $y={1600} $w={2546} $h={224} $r="0 0 20px 20px" $bg="linear-gradient(180deg, #555 0, #5f5d5e 208px, #767172 100%)" />
        <BackWindow $x={16} $y={93} $w={2990} $h={1715} $r="18px 0 20px 20px" $bg="linear-gradient(90deg, #c6c5de 0, #aeaac0 1%, #a19ca4 20%, #a49ea2 60%, #a8a0a2 97%, #b9b0b2 100%)" $shadow="0 0 0 1px rgba(0,0,0,.75), 0 2px 5px rgba(0,0,0,.4)" />
        <BrowserWindow>
          <Page>
            <PageHeader>
              <div>
                <PageTitle>Content Management System</PageTitle>
                <Welcome>Welcome back, admin</Welcome>
              </div>
              <ButtonRow>
                <Button><Eye />View Site</Button>
                <Button>Logout</Button>
              </ButtonRow>
            </PageHeader>
            <ButtonRow $top={64}>
              <Button $primary>Posts</Button>
              <Button><ImageIcon />Images</Button>
              <Button><ChartColumn />Analytics</Button>
            </ButtonRow>
            <SectionHeader>
              <SectionTitle>Blog Posts</SectionTitle>
              <Button $primary><Plus />New Post</Button>
            </SectionHeader>
            <PostList>
              {POSTS.map((p) => <PostCard key={p.title} post={p} />)}
            </PostList>
          </Page>
        </BrowserWindow>
        <Dock />
      </Desktop>
    </Screen>
  );
}
